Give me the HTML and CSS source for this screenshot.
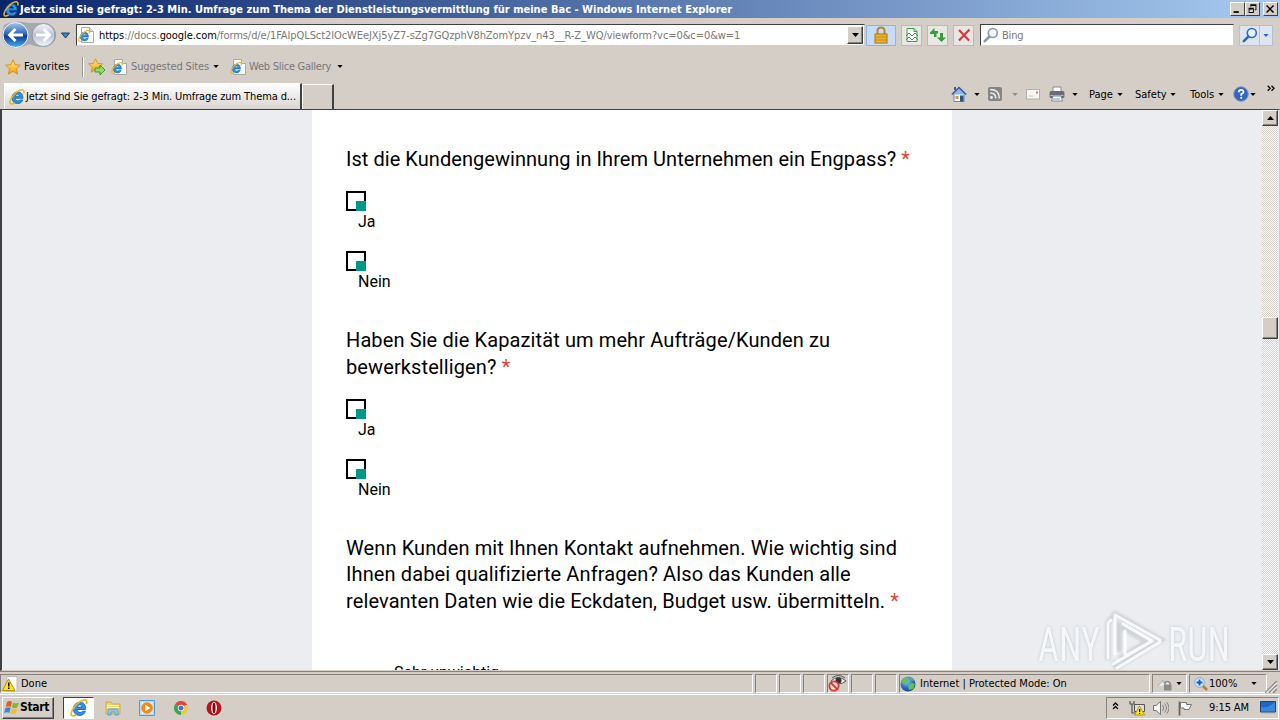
FILE: index.html
```html
<!DOCTYPE html>
<html lang="de">
<head>
<meta charset="utf-8">
<title>Umfrage - Windows Internet Explorer</title>
<link rel="stylesheet" href="styles.css">
</head>
<body>
<svg class="defs" width="0" height="0">
  <defs>
    <linearGradient id="orb" x1="0" y1="0" x2="0" y2="1"><stop offset="0" stop-color="#a9c8ee"/><stop offset=".45" stop-color="#2f67bb"/><stop offset=".55" stop-color="#0c3c94"/><stop offset="1" stop-color="#49b4ee"/></linearGradient>
    <linearGradient id="orb2" x1="0" y1="0" x2="0" y2="1"><stop offset="0" stop-color="#f4f6fb"/><stop offset=".5" stop-color="#b9c2d6"/><stop offset="1" stop-color="#f2f6fc"/></linearGradient>
    <radialGradient id="globe" cx=".4" cy=".3" r=".8"><stop offset="0" stop-color="#8fd0ff"/><stop offset=".6" stop-color="#2366c2"/><stop offset="1" stop-color="#123a86"/></radialGradient>
    <linearGradient id="star" x1="0" y1="0" x2="0" y2="1"><stop offset="0" stop-color="#fff08a"/><stop offset="1" stop-color="#f39a10"/></linearGradient>
    <symbol id="ie" viewBox="0 0 16 16">
      <path d="M13.900 9.300H6.300c.1 1.900 1.300 2.700 2.600 2.700 1 0 1.700-.4 2.100-1.100h2.700c-.8 2.400-2.500 3.700-5 3.700-3.400 0-5.700-2.300-5.700-5.700 0-3.500 2.500-6 5.900-6 3.500 0 5.200 2.500 5 6.400zM6.400 7.200h4.200c-.1-1.300-.9-2-2-2s-2 .7-2.200 2z" fill="#2f93e2" stroke="#0f56a6" stroke-width=".7" fill-rule="evenodd"/>
      <path d="M14.600 4.600c.7-1.800.5-3.200-.6-3.700C12 .1 7.400 2.600 4.200 6.600 1.300 10.200.2 13.800 1.700 14.800c.9.600 2.400.1 4-1" fill="none" stroke="#e9b526" stroke-width="1.500"/>
    </symbol>
    <symbol id="iepage" viewBox="0 0 16 16">
      <path d="M3.500.5h8l4 4v11h-12z" fill="#fdfdfd" stroke="#a9a9a9"/><path d="M11.500.5v4h4" fill="#ddd" stroke="#a9a9a9"/>
      <use href="#ie" x="0" y="3" width="12" height="12"/>
    </symbol>
    <symbol id="staricon" viewBox="0 0 16 16"><path d="M8 .8l2.100 4.900 5.300.5-4 3.600 1.200 5.300L8 12.300l-4.600 2.800 1.200-5.300-4-3.600 5.300-.5z" fill="url(#star)" stroke="#d98b10" stroke-width=".9"/></symbol>
    <symbol id="down" viewBox="0 0 7 4"><path d="M0 0h7L3.500 4z" fill="currentColor"/></symbol>
    <symbol id="lens" viewBox="0 0 16 16"><path d="M6.800 9.200L1.800 14.200" stroke="currentColor" stroke-width="2.600" stroke-linecap="round"/><circle cx="9.800" cy="6" r="4.500" fill="#eef6ff" fill-opacity=".8" stroke="currentColor" stroke-width="1.600"/></symbol>
    <pattern id="dither" width="2" height="2" patternUnits="userSpaceOnUse"><rect width="2" height="2" fill="#fff"/><path d="M0 0h1v1H0zM1 1h1v1H1z" fill="#d5cec7"/></pattern>
    <filter id="soft"><feGaussianBlur stdDeviation="1"/></filter>
  </defs>
</svg>
<div class="screen">
  <header class="title">
    <svg class="i16"><use href="#ie"/></svg>
    <span class="t-title">Jetzt sind Sie gefragt: 2-3 Min. Umfrage zum Thema der Dienstleistungsvermittlung für meine Bac - Windows Internet Explorer</span>
    <div class="winbtns">
      <svg class="wb" viewBox="0 0 15 13"><path d="M3 9h6v2H3z"/></svg>
      <svg class="wb" viewBox="0 0 15 13"><path d="M5 1h7v7h-2V7h1V3H6v1H5zM3 5h6v6H3zM4 7v3h4V7z" fill-rule="evenodd"/></svg>
      <svg class="wb last" viewBox="0 0 15 13"><path d="M3 2.500l8 8M11 2.500l-8 8" stroke="#000" stroke-width="1.700"/></svg>
    </div>
  </header>

  <div class="nav">
    <svg class="orbs" viewBox="0 0 72 30">
      <path d="M4 5Q15-1 28 3h15q10 0 13 9v6q-3 9-14 9-7 0-13-3-5 3-13 4Q4 28 2 15z" fill="#a6a8b0"/>
      <circle cx="15.500" cy="15" r="12.500" fill="url(#orb)" stroke="#f5f7fb"/>
      <path d="M23 15H10m5.500-6L9.500 15l6 6" fill="none" stroke="#fff" stroke-width="2.800"/>
      <circle cx="43.500" cy="15" r="11.500" fill="url(#orb2)" stroke="#8f98ab"/>
      <path d="M36 15h13m-5.500-6l6 6-6 6" fill="none" stroke="#fff" stroke-width="2.800"/>
      <path d="M61.500 13h8l-4 5z" fill="#4385bd" stroke="#123f72"/>
    </svg>
    <div class="address">
      <svg class="i16"><use href="#iepage"/></svg>
      <span class="t-url"><b>https</b>://docs.<b>google.com</b>/forms/d/e/1FAIpQLSct2lOcWEeJXj5yZ7-sZg7GQzphV8hZomYpzv_n43__R-Z_WQ/viewform?vc=0&amp;c=0&amp;w=1</span>
      <span class="combo"><svg class="arr"><use href="#down"/></svg></span>
    </div>
    <div class="nb lock"><svg class="i18" viewBox="0 0 18 18"><path d="M5.500 9V5q0-3.500 3.500-3.500T12.500 5v4" fill="none" stroke="#b28a2b" stroke-width="2"/><rect x="3" y="8" width="12" height="9" fill="#f0b426" stroke="#a97712"/><path d="M3 11h12M3 14h12" stroke="#c08a1a"/></svg></div>
    <div class="nb"><svg class="i16" viewBox="0 0 16 16"><path d="M3 1.500h7l3 3v10H3z" fill="#fff" stroke="#3f9a4b"/><path d="M10 1.500v3h3M2 9l3-3 3 3 3-3 3 3" fill="none" stroke="#3f9a4b"/><path d="M2 13l3-3 3 3 3-3 3 3" fill="none" stroke="#3f9a4b"/></svg></div>
    <div class="nb"><svg class="i16" viewBox="0 0 16 16"><path d="M0 5.500L4.500 1v3H8v2.500H6.500V10H4V7H0zM16 10.500L11.500 15l-4.500-4.500h3V6H13v4.500z" fill="#3b9b3b"/></svg></div>
    <div class="nb"><svg class="i16" viewBox="0 0 16 16"><path d="M3 3l10 10.500M13.500 2.500L3 13.500" fill="none" stroke="#d33a3a" stroke-width="2.200"/></svg></div>
    <div class="search"><svg class="i16 glass"><use href="#lens"/></svg><span class="t-bing">Bing</span></div>
    <div class="go"><span class="gol"><svg class="i16"><use href="#lens"/></svg></span><span class="gor"><svg class="arr5"><use href="#down"/></svg></span></div>
  </div>

  <div class="fav">
    <svg class="i16"><use href="#staricon"/></svg>
    <span class="t-fav">Favorites</span>
    <i class="sep"></i>
    <svg class="i18 addfav" viewBox="0 0 18 18"><use href="#staricon" width="15" height="15"/><path d="M7 10h5V7l5 5-5 5v-3H7z" fill="#8ede62" stroke="#3c9c2c"/></svg>
    <svg class="i16 p1"><use href="#iepage"/></svg>
    <span class="t-sug">Suggested Sites</span><svg class="arr5"><use href="#down"/></svg>
    <svg class="i16 p2"><use href="#iepage"/></svg>
    <span class="t-web">Web Slice Gallery</span><svg class="arr5"><use href="#down"/></svg>
  </div>

  <div class="cmd">
    <div class="tab"><svg class="i16"><use href="#ie"/></svg><span class="t-tab">Jetzt sind Sie gefragt: 2-3 Min. Umfrage zum Thema d...</span></div>
    <div class="newtab"></div>
    <div class="tools">
      <svg class="i16" viewBox="0 0 16 16"><path d="M3 8v7.500h10V8" fill="#f3f8ff" stroke="#6884ad"/><path d="M.8 8.500L8 1.500l7.200 7" fill="#8db6e8" stroke="#315c9d" stroke-width="1.500"/><path d="M3 1h2v3H3z" fill="#315c9d"/><path d="M9 9.500h3.500v6H9z" fill="#24568c"/><path d="M4.500 10h3v3h-3z" fill="#d79436"/></svg>
      <svg class="arr5 a1"><use href="#down"/></svg>
      <svg class="i14 rss" viewBox="0 0 14 14"><rect width="14" height="14" rx="2" fill="#858585"/><circle cx="3.500" cy="10.500" r="1.400" fill="#eee"/><path d="M2.200 6q5.600 0 5.600 5.600M2.200 2.600q9.200 0 9.200 9" fill="none" stroke="#eee" stroke-width="1.500"/></svg>
      <svg class="arr5 a2"><use href="#down"/></svg>
      <svg class="mail" viewBox="0 0 14 11"><rect x=".5" y=".5" width="13" height="9.500" fill="#f8f6f3" stroke="#b4ada5"/><path d="M2.500 7h5" stroke="#c9c5be"/><path d="M10 2.500h2v2h-2z" fill="#d57970"/></svg>
      <svg class="i16 printer" viewBox="0 0 16 16"><path d="M4 1h8v5H4z" fill="#fff" stroke="#888"/><rect x=".6" y="5" width="14.800" height="7" rx="1.500" fill="#686c76"/><path d="M1.500 9.500h13" stroke="#b8bcc5"/><path d="M4 10h8l1.500 5h-11z" fill="#f8fcff" stroke="#7f8a97"/><path d="M4 13h7" stroke="#65a3da"/></svg>
      <svg class="arr5 a3"><use href="#down"/></svg>
      <span class="t-page">Page</span><svg class="arr5"><use href="#down"/></svg>
      <span class="t-safe">Safety</span><svg class="arr5"><use href="#down"/></svg>
      <span class="t-tool">Tools</span><svg class="arr5"><use href="#down"/></svg>
      <svg class="i16 help" viewBox="0 0 16 16"><circle cx="8" cy="8" r="7.300" fill="#3365c4" stroke="#7f9bd0"/><path d="M5.700 6.200Q5.800 3.800 8.100 3.800t2.400 2.100Q10.500 7.300 8.200 8.200v1.500" fill="none" stroke="#fff" stroke-width="1.800"/><path d="M7.200 10.900h2v1.800h-2z" fill="#fff"/></svg>
      <svg class="arr5 a4"><use href="#down"/></svg>
      <svg class="chev" viewBox="0 0 8 7"><path d="M.7.700l2.500 2.500L.7 5.700M4.500.700L7 3.200 4.500 5.700" fill="none" stroke="#000" stroke-width="1.300"/></svg>
    </div>
  </div>

  <main class="view">
    <div class="page">
      <section class="form">
        <h2 class="q1">Ist die Kundengewinnung in Ihrem Unternehmen ein Engpass? <em>*</em></h2>
        <div class="opt"><i class="box"></i><span>Ja</span></div>
        <div class="opt"><i class="box"></i><span>Nein</span></div>
        <h2 class="q2">Haben Sie die Kapazität um mehr Aufträge/Kunden zu<br>bewerkstelligen? <em>*</em></h2>
        <div class="opt"><i class="box"></i><span>Ja</span></div>
        <div class="opt"><i class="box"></i><span>Nein</span></div>
        <h2 class="q3">Wenn Kunden mit Ihnen Kontakt aufnehmen. Wie wichtig sind<br>Ihnen dabei qualifizierte Anfragen? Also das Kunden alle<br>relevanten Daten wie die Eckdaten, Budget usw. übermitteln. <em>*</em></h2>
        <div class="scale">Sehr unwichtig</div>
      </section>
    </div>
    <div class="scroll">
      <span class="sb"><svg class="arr up"><use href="#down"/></svg></span>
      <svg class="track before"><rect width="16" height="400" fill="url(#dither)"/></svg>
      <span class="thumb"></span>
      <svg class="track after"><rect width="16" height="400" fill="url(#dither)"/></svg>
      <span class="sb"><svg class="arr"><use href="#down"/></svg></span>
    </div>
    <svg class="mark" viewBox="0 0 204 70">
      <g class="shade" filter="url(#soft)">
        <path d="M75 52V15l7-9 46 26-44 27-4-6M86 44V17l28 17-28 17"/>
      </g>
      <g class="glow"><text x="5" y="53" textLength="62" lengthAdjust="spacingAndGlyphs">ANY</text><text x="135" y="53" textLength="62" lengthAdjust="spacingAndGlyphs">RUN</text>
      <path d="M75 50V15l3-3M82 46V7l45 25M84 60l43-26M92 23v25l27-15-29-17M80 56l36-21"/></g>
    </svg>
  </main>

  <div class="status">
    <div class="pane done"><svg class="i16" viewBox="0 0 16 16"><path d="M5 .5h10v15H3z" fill="#fff" stroke="#bbb"/><path d="M6.500 3L13 14.500H.5z" fill="#ffe21f" stroke="#b89200"/><path d="M6 6.500h1.500v4H6zM6 11.500h1.500V13H6z"/></svg><span class="t-done">Done</span></div>
    <div class="pane s"></div><div class="pane s"></div><div class="pane s"></div>
    <div class="pane s"><svg class="eye" viewBox="0 0 19 17"><path d="M3 6Q10-1 18 6 10 12 3 6z" fill="#f7f5f1" stroke="#555"/><path d="M4 3Q10-2 17 3" fill="none" stroke="#555"/><circle cx="10.500" cy="5.500" r="3" fill="#333"/><circle cx="6" cy="11" r="4.600" fill="#f4dcd8" stroke="#cf3c33" stroke-width="1.800"/><path d="M3 8l6 6" stroke="#cf3c33" stroke-width="1.800"/></svg></div>
    <div class="pane s"></div><div class="pane s"></div>
    <div class="pane zone"><svg class="i16" viewBox="0 0 16 16"><circle cx="8" cy="8" r="7.500" fill="url(#globe)"/><path d="M3 3Q7 0 9 3L8 6 5 8 1 7zM8 9l4-2 3 1-2 5-4 1zM10 1l4 3-2 1z" fill="#67bf57"/></svg><span class="t-zone">Internet | Protected Mode: On</span></div>
    <div class="pane priv"><svg class="i16" viewBox="0 0 16 16"><path d="M1 10l5-6v3q6-4 7 2" fill="#eee" stroke="#aaa"/><path d="M8 9V7q2.500-3 5 0v2" fill="none" stroke="#888" stroke-width="1.500"/><rect x="7" y="8.500" width="7.500" height="6" fill="#8b8b8b"/></svg><svg class="arr5"><use href="#down"/></svg></div>
    <div class="pane zoom"><svg class="i14" viewBox="0 0 14 14"><path d="M8 8l5 5" stroke="#b27b38" stroke-width="2.500"/><circle cx="5.500" cy="5.500" r="4.800" fill="#dceeff" stroke="#78a5d8"/><path d="M5.500 2.500v6M2.500 5.500h6" stroke="#145cc0" stroke-width="2"/></svg><span class="t-zoom">100%</span><svg class="arr5"><use href="#down"/></svg></div>
    <svg class="grip" viewBox="0 0 12 12"><path d="M0 12L12 0M4 12l8-8M8 12l4-4" stroke="#888" stroke-width="1.500"/><path d="M1.500 12L12 1.500M5.500 12L12 5.500" stroke="#fff"/></svg>
  </div>

  <footer class="task">
    <div class="start"><svg class="i16" viewBox="0 0 16 16"><path d="M3 2q3-2 5 0L6.800 7Q4.500 5.500 1.700 7z" fill="#e65a25"/><path d="M9 2.500q3 1.500 6 0L13.500 7.300q-3 1.700-5.700.2z" fill="#7dbb35"/><path d="M1.400 8q3-1.500 5.200 0L5.300 13Q3 11.500 0 13z" fill="#3f83d3"/><path d="M7.600 8.500q2.700 1.500 5.600 0L12 13.300q-3 1.500-5.700.2z" fill="#f6bd25"/></svg><b class="t-start">Start</b></div>
    <div class="run"><svg class="i18"><use href="#ie"/></svg></div>
    <svg class="i16 explorer" viewBox="0 0 16 16"><path d="M1 2h5l1.500 2H15v10H1z" fill="#efd36e" stroke="#c3a548" stroke-width=".8"/><path d="M2 5.500h12M2 7.500h12" stroke="#fff4b9"/><path d="M3 15v-5q0-1 1-1h8q1 0 1 1v5h-3v-3H6v3z" fill="#8cc8ee" stroke="#4d94c9" stroke-width=".8"/></svg>
    <svg class="i16 wmp" viewBox="0 0 16 16"><path d="M.5.500h15v15H.5z" fill="#b8d8f3" stroke="#5998d0"/><path d="M2.500 2.500h11v11h-11z" fill="#eaf4fc"/><circle cx="8" cy="8" r="5.800" fill="#f18a17"/><path d="M6.200 4.800L11.500 8l-5.300 3.200z" fill="#fff"/></svg>
    <svg class="i14 chrome" viewBox="0 0 14 14"><path d="M7 7L.9 3.500A7 7 0 0 1 13.100 3.500z" fill="#d94a3f"/><path d="M7 7l6.100-3.500A7 7 0 0 1 7 14z" fill="#f0c93a"/><path d="M7 7v7A7 7 0 0 1 .9 3.500z" fill="#45a15a"/><path d="M7 3.500h6.100" stroke="#d94a3f"/><circle cx="7" cy="7" r="3.200" fill="#fff"/><circle cx="7" cy="7" r="2.500" fill="#4479d3"/></svg>
    <svg class="i16 opera" viewBox="0 0 16 16"><circle cx="8" cy="8" r="7.500" fill="#b71419"/><ellipse cx="8" cy="8" rx="3" ry="6" fill="#f6eeee"/><ellipse cx="8" cy="8" rx="1.500" ry="5.300" fill="#7c080c"/></svg>
    <div class="tray">
      <svg class="up2" viewBox="0 0 7 8"><path d="M1 3.500L3.500 1 6 3.500M1 7l2.500-2.500L6 7" fill="none" stroke="#000" stroke-width="1.300"/></svg>
      <svg class="i16 net" viewBox="0 0 16 16"><path d="M5.500 4.500h10v7h-10z" fill="#ddd" stroke="#555"/><path d="M1 1v3h4V1M3 4v9h5" fill="none" stroke="#555" stroke-width="1.200"/><path d="M10.500 6l5 9h-10z" fill="#ffe01f" stroke="#a58d00" stroke-width=".8"/><path d="M10 9h1.200v3H10zM10 13h1.200v1H10z"/></svg>
      <svg class="i16 vol" viewBox="0 0 16 16"><path d="M.5 5.500H3L7.500 1.500v13L3 10.500H.5z" fill="#f4f4f4" stroke="#777"/><path d="M9.500 5q2.500 3 0 6M11.500 3.500q4 4.500 0 9M13.500 2q5 6 0 12" fill="none" stroke="#858585"/></svg>
      <svg class="i16 flag" viewBox="0 0 16 16"><path d="M2.500 15.500V1.500" stroke="#666" stroke-width="1.800"/><path d="M3.500 2.500h6v2h5l-2.500 5h-5V8H3.500z" fill="#f6f6f6" stroke="#777"/></svg>
      <span class="t-clock">9:15 AM</span>
      <svg class="desk" viewBox="0 0 16 13"><path d="M.5.500h15v10.500H.5z" fill="#2067bf" stroke="#18457e"/><path d="M1 6Q8 8 15 1v9.500H1z" fill="#3b89d9"/><path d="M1 12.500h14" stroke="#a6c4e4"/></svg>
    </div>
  </footer>
</div>
</body>
</html>
```
FILE: styles.css
```css
* { box-sizing: border-box; }
body { margin: 0; font-family: "DejaVu Sans Condensed", "DejaVu Sans", sans-serif; font-stretch: condensed; font-size: 11px; color: #000; overflow: hidden; }
.defs { position: absolute; }
svg { flex: none; display: block; }
span { white-space: nowrap; }
.screen { width: 1280px; height: 720px; display: flex; flex-direction: column; background: #d5cec7; }
.i14 { width: 14px; height: 14px; }
.i16 { width: 16px; height: 16px; }
.i18 { width: 18px; height: 18px; }
.arr { width: 7px; height: 4px; }
.arr5 { width: 6px; height: 3px; }

.title { height: 18px; display: flex; align-items: center; padding-left: 3px; background: linear-gradient(90deg, #0a246a, #a6caf0); color: #fff; }
.t-title { font-weight: bold; letter-spacing: .02px; margin-left: 1px; flex: 1; }
.winbtns { display: flex; padding-right: 2px; }
.wb { width: 15px; height: 14px; background: #d5cec7; border: 1px solid; border-color: #fff #404040 #404040 #fff; }
.wb.last { margin-left: 3px; }

.nav { height: 34px; display: flex; align-items: center; }
.orbs { width: 72px; height: 30px; }
.address { width: 789px; height: 22px; margin-left: 4px; display: flex; align-items: center; background: #fff; border: 1px solid; border-color: #404040 #d4d0c8 #d4d0c8 #404040; padding-left: 1px; }
.t-url { color: #787878; margin: 1px 0 0 5px; flex: 1; letter-spacing: -.07px; }
.t-url b { font-weight: normal; color: #000; }
.combo, .sb, .thumb { background: #d5cec7; border: 1px solid; border-color: #fff #404040 #404040 #fff; box-shadow: inset -1px -1px #87827b; display: flex; align-items: center; justify-content: center; }
.combo { width: 16px; height: 18px; margin-right: 1px; }
.nb { width: 21px; height: 21px; margin-left: 5px; display: flex; align-items: center; justify-content: center; background: #e9e7e3; border: 1px solid #b9b9b9; }
.nb.lock { width: 30px; margin-left: 1px; background: #c7dcfa; border-color: #8fb4ed; }
.search { width: 254px; height: 22px; margin-left: 6px; display: flex; align-items: center; background: #fff; border: 1px solid; border-color: #404040 #d4d0c8 #d4d0c8 #404040; padding-left: 2px; }
.glass { color: #8798aa; }
.t-bing { color: #777; margin: 1px 0 0 3px; letter-spacing: -.2px; }
.go { display: flex; width: 34px; height: 21px; margin-left: 5px; border: 1px solid #b3bfd3; background: #dfe5ef; color: #2468cc; }
.gol { width: 20px; display: flex; align-items: center; justify-content: center; border-right: 1px solid #b3bfd3; }
.gor { flex: 1; display: flex; align-items: center; justify-content: center; }

.fav { height: 29px; display: flex; align-items: center; padding-left: 5px; }
.t-fav { width: 58px; margin-left: 3px; letter-spacing: .1px; }
.sep { width: 2px; height: 20px; background: #fff; border-left: 1px solid #9a958e; }
.addfav { margin-left: 4px; }
.p1 { margin-left: 5px; }
.p2 { margin-left: 11px; }
.t-sug { color: #777; margin-left: 4px; width: 82px; letter-spacing: -.12px; }
.t-web { color: #777; margin-left: 3px; width: 88px; letter-spacing: -.25px; }

.cmd { height: 28px; display: flex; align-items: flex-end; padding-left: 4px; }
.tab { width: 298px; height: 26px; display: flex; align-items: center; padding-left: 4px; background: linear-gradient(#fff, #d9d4ce); border: 1px solid #fff; border-right: 2px solid #404040; border-bottom: 0; }
.t-tab { margin-left: 1px; letter-spacing: -.11px; }
.newtab { width: 32px; height: 25px; border: 1px solid #fff; border-right: 2px solid #404040; border-bottom: 0; background: #d5cec7; }
.tools { flex: 1; height: 28px; display: flex; align-items: center; padding: 0 0 2px 617px; }
.a1 { margin-left: 7px; }
.rss { margin-left: 8px; }
.a2 { margin-left: 10px; color: #8e8a84; }
.mail { width: 14px; height: 11px; margin-left: 8px; }
.printer { margin-left: 9px; }
.a3 { margin-left: 7px; }
.t-page { width: 28px; margin-left: 11px; }
.t-safe { width: 35px; margin-left: 12px; }
.t-tool { width: 28px; margin-left: 14px; }
.help { margin-left: 9px; }
.a4 { margin-left: 1px; }
.chev { width: 8px; height: 7px; margin: -12px 0 0 11px; }

.view { height: 562px; position: relative; display: flex; border: solid #404040; border-width: 1px 1px 1px 2px; border-right-color: #d5cec7; border-bottom-color: #d5cec7; background: #ebedf1; overflow: hidden; }
.page { width: 1260px; padding-left: 310px; }
.form { width: 640px; height: 560px; background: #fff; padding: 36px 0 0 34px; font-family: Roboto, sans-serif; font-stretch: normal; }
.form h2 { margin: 0; font-size: 20px; font-weight: 400; line-height: 26.67px; letter-spacing: .11px; white-space: nowrap; }
.form .q1 { letter-spacing: .05px; }
.form em { font-style: normal; color: #db4437; }
.opt { height: 60px; font-size: 16px; line-height: 22px; }
.q1 + .opt { margin-top: 18px; }
.q2 + .opt { margin-top: 18px; }
.opt span { display: block; margin-left: 12px; }
.box { display: block; width: 20px; height: 20px; background: linear-gradient(#009688, #009688) 100% 100% / 10px 10px no-repeat, linear-gradient(#fff, #fff) 2px 2px / 16px 16px no-repeat, #000; }
.form .q2 { padding-top: 16px; line-height: 27px; }
.q3 { padding-top: 16px; }
.scale { font-size: 16px; line-height: 20px; margin: 48px 0 0 48px; }
.scroll { width: 16px; display: flex; flex-direction: column; }
.sb { height: 16px; flex: none; }
.up { transform: rotate(180deg); }
.thumb { height: 22px; flex: none; }
.track { width: 16px; }
.before { height: 191px; }
.after { flex: 1; min-height: 0; }
.mark { position: absolute; left: 1031px; top: 498px; width: 204px; height: 70px; }
.mark text { font-family: Roboto, sans-serif; font-weight: 400; font-size: 49px; filter: drop-shadow(0 0 1.5px #b9bfc6); }
.shade { opacity: .75; }
.shade path { fill: none; stroke: #c7ccd2; stroke-width: 6; }
.glow { fill: #f7f9fb; opacity: .85; }
.glow path { fill: none; stroke: #fff; stroke-width: 3; stroke-linejoin: round; stroke-linecap: round; }

.status { height: 23px; display: flex; align-items: center; border-top: 1px solid #87827b; padding-top: 1px; }
.pane { height: 19px; display: flex; align-items: center; border: 1px solid; border-color: #87827b #fff #fff #87827b; margin-right: 2px; }
.done { width: 753px; padding-left: 1px; }
.t-done { margin-left: 3px; }
.s { width: 22px; }
.eye { width: 19px; height: 17px; }
.zone { width: 251px; padding-left: 0; }
.t-zone { margin-left: 4px; }
.priv { width: 35px; padding-left: 4px; }
.priv .arr5 { margin-left: 3px; }
.zoom { width: 78px; padding-left: 4px; }
.t-zoom { margin-left: 1px; width: 42px; }
.grip { width: 12px; height: 12px; margin: 6px 0 0 -4px; }

.task { height: 26px; display: flex; align-items: center; border-top: 1px solid #fff; }
.start { width: 52px; height: 22px; margin-left: 2px; display: flex; align-items: center; padding-left: 1px; border: 1px solid; border-color: #fff #404040 #404040 #fff; box-shadow: inset -1px -1px #87827b; }
.t-start { font-size: 12px; letter-spacing: -.35px; margin: -2px 0 0 0; }
.run { width: 31px; height: 22px; margin-left: 9px; display: flex; align-items: center; justify-content: center; background: #fff; border: 1px solid; border-color: #404040 #fff #fff #404040; }
.explorer { margin-left: 11px; }
.wmp { margin-left: 18px; }
.chrome { margin-left: 19px; }
.opera { margin-left: 18px; }
.tray { width: 173px; height: 22px; margin-left: auto; margin-right: 1px; display: flex; align-items: center; border: 1px solid; border-color: #87827b #fff #fff #87827b; }
.up2 { width: 7px; height: 8px; margin: -4px 0 0 5px; }
.net { margin-left: 10px; }
.vol { margin-left: 8px; }
.flag { margin-left: 8px; }
.t-clock { width: 41px; margin-left: 16px; letter-spacing: -.1px; }
.desk { width: 16px; height: 13px; margin-left: 10px; }
```
